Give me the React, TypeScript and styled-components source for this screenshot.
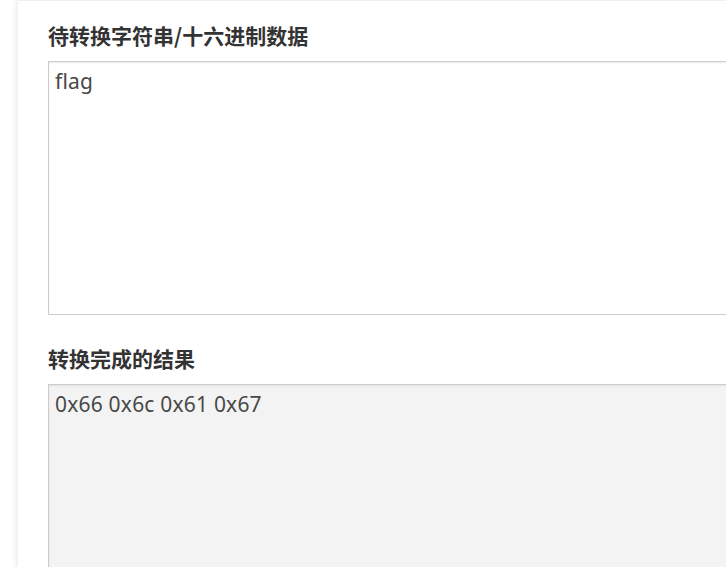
import React from "react"
import styled, { createGlobalStyle } from "styled-components"

const GlobalStyle = createGlobalStyle`
  html, body {
    margin: 0;
    padding: 0;
    background: #fff;
    overflow: hidden;
  }
  body {
    font-family: "Noto Sans", "Noto Sans CJK SC", sans-serif;
  }
`

const Page = styled.div`
  padding-left: 18px;
  height: 100vh;
  overflow: hidden;
`

const Card = styled.div`
  background: #fff;
  border-top: 1px solid #f0f0f0;
  box-shadow: -2px 0 6px rgba(0, 0, 0, 0.08);
  padding: 19px 0 0 30px;
  min-height: 100%;
`

const Field = styled.div`
  margin-bottom: 28px;
`

const Label = styled.label`
  display: block;
  font-family: "Noto Sans CJK SC", "Noto Sans", sans-serif;
  font-weight: 700;
  font-size: 21px;
  line-height: 30px;
  color: #333;
  margin-bottom: 11px;
`

const TextArea = styled.textarea<{ $readonly?: boolean }>`
  display: block;
  box-sizing: border-box;
  width: calc(100% + 40px);
  height: 254px;
  margin: 0;
  padding: 4px 6px;
  border: 1px solid #ccc;
  border-radius: 0;
  box-shadow: inset 0 1px 2px rgba(0, 0, 0, 0.08);
  background: ${({ $readonly }) => ($readonly ? "#f3f3f3" : "#fff")};
  color: #484848;
  font-family: "Noto Sans", "Noto Sans CJK SC", sans-serif;
  font-size: 21px;
  letter-spacing: 0.2px;
  line-height: 30px;
  resize: none;
  outline: none;
`

const App = () => {
  return (
    <Page>
      <GlobalStyle />
      <Card>
        <Field>
          <Label>待转换字符串/十六进制数据</Label>
          <TextArea defaultValue="flag" />
        </Field>
        <Field>
          <Label>转换完成的结果</Label>
          <TextArea $readonly readOnly value="0x66 0x6c 0x61 0x67" />
        </Field>
      </Card>
    </Page>
  )
}

export default App
